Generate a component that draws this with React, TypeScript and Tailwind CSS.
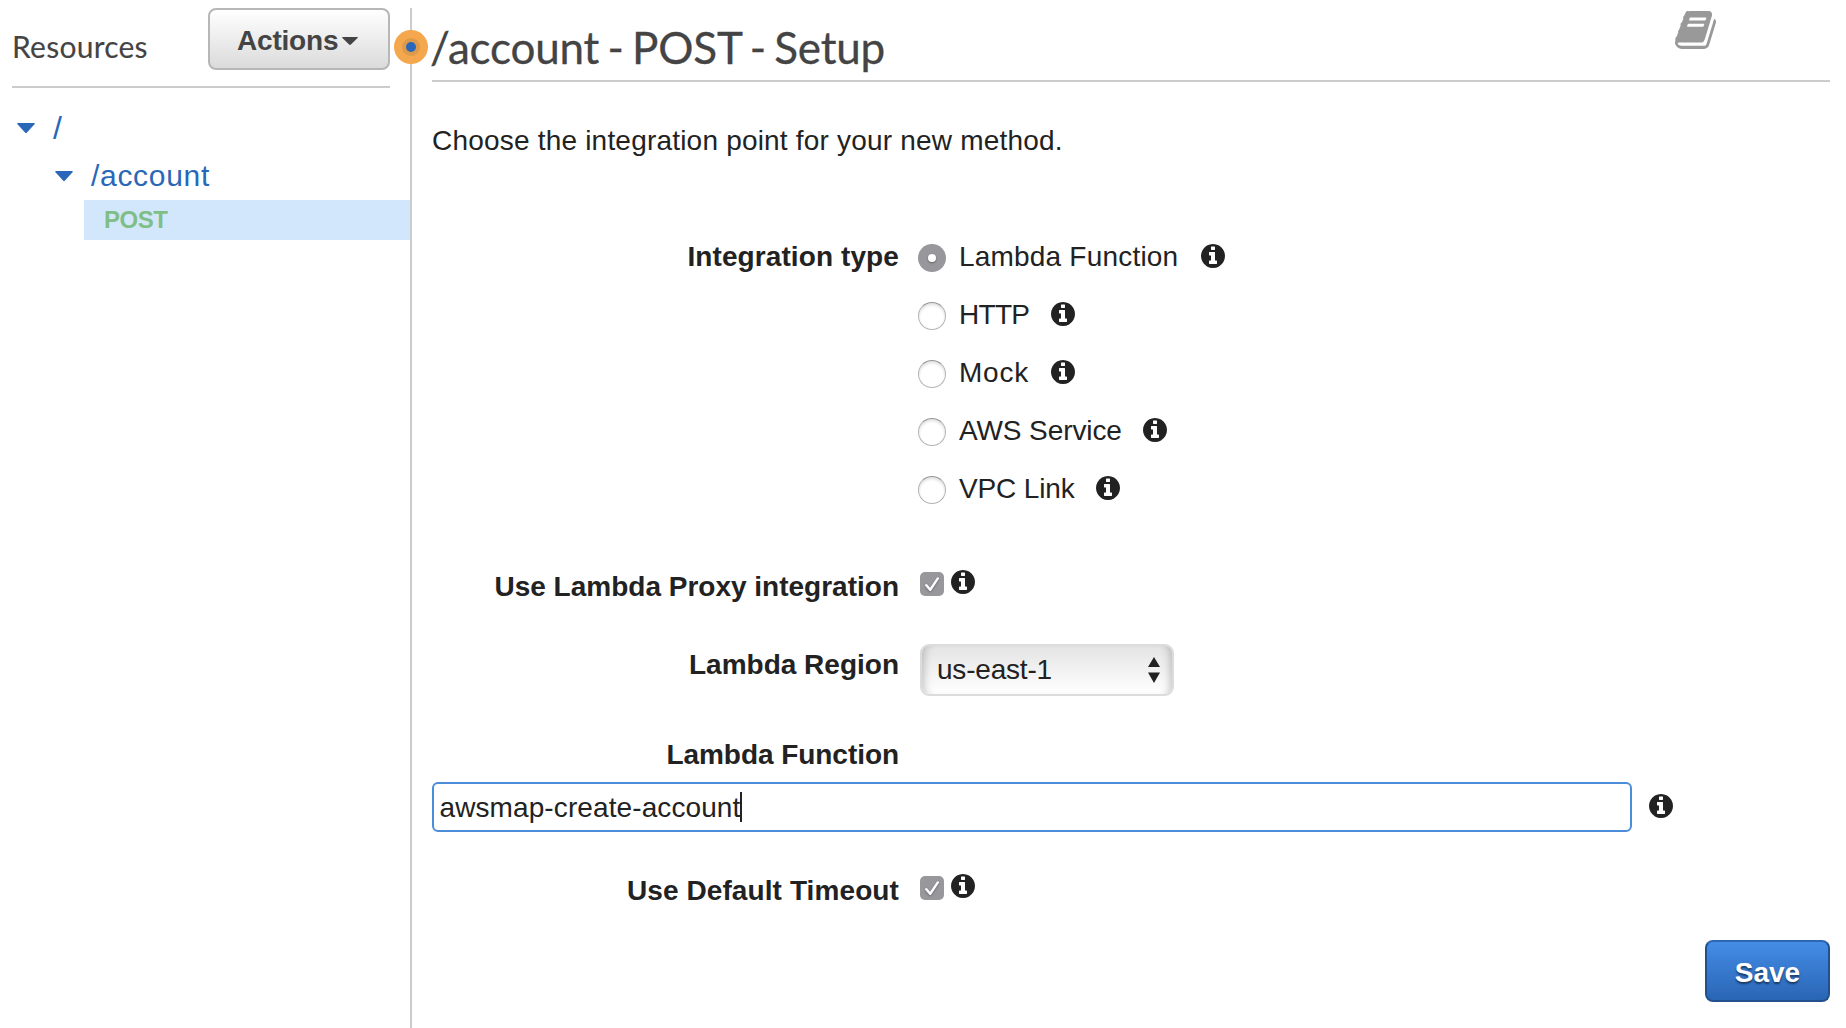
import React from "react";

function InfoIcon({ className = "" }: { className?: string }) {
  return (
    <svg viewBox="128 128 1536 1536" className={`h-6 w-6 shrink-0 ${className}`} fill="#222">
      <path d="M1152 1376v-160q0-14-9-23t-23-9h-96v-512q0-14-9-23t-23-9h-320q-14 0-23 9t-9 23v160q0 14 9 23t23 9h96v320h-96q-14 0-23 9t-9 23v160q0 14 9 23t23 9h448q14 0 23-9t9-23zm-128-896v-160q0-14-9-23t-23-9h-192q-14 0-23 9t-9 23v160q0 14 9 23t23 9h192q14 0 23-9t9-23zm640 416q0 209-103 385.5t-279.5 279.5-385.5 103-385.5-103-279.5-279.5-103-385.5 103-385.5 279.5-279.5 385.5-103 385.5 103 279.5 279.5 103 385.5z" />
    </svg>
  );
}

function BookIcon() {
  return (
    <svg viewBox="64 128 1664 1536" className="mr-[114px] mt-[11px] h-[38px] w-[41px]" fill="#999">
      <path d="M1703 478q40 57 18 129l-275 906q-19 64-76.5 107.5t-122.5 43.5h-923q-77 0-148.5-53.5t-99.5-131.5q-24-67-2-127 0-4 3-27t4-37q1-8-3-21.5t-3-19.5q2-11 8-21t16.5-23.5 16.5-23.5q23-38 45-91.5t30-91.5q3-10 .5-30t-.5-28q3-11 17-28t17-23q21-36 42-92t25-90q1-9-2.5-32t.5-28q4-13 22-30.5t22-22.5q19-26 42.5-84.5t27.5-96.5q1-8-3-25.5t-2-26.5q2-8 9-18t18-23 17-21q8-12 16.5-30.5t15-35 16-36 19.5-32 26.5-23.5 36-11.5 47.5 5.5l-1 3q38-9 51-9h761q74 0 114 56t18 130l-274 906q-36 119-71.5 153.5t-128.5 34.5h-869q-27 0-38 15-11 16-1 43 24 70 144 70h923q29 0 56-15.5t35-41.5l300-987q7-22 5-57 38 15 59 43zm-1064 2q-4 13 2 22.5t20 9.5h608q13 0 25.5-9.5t16.5-22.5l21-64q4-13-2-22.5t-20-9.5h-608q-13 0-25.5 9.5t-16.5 22.5zm-83 256q-4 13 2 22.5t20 9.5h608q13 0 25.5-9.5t16.5-22.5l21-64q4-13-2-22.5t-20-9.5h-608q-13 0-25.5 9.5t-16.5 22.5z" />
    </svg>
  );
}

function Caret({ className }: { className: string }) {
  return (
    <svg viewBox="0 0 18 10" preserveAspectRatio="none" className={className} fill="currentColor">
      <path d="M1 0H17Q18.500 0 17.500 1.200L10 9.400Q9 10.400 8 9.400L0.500 1.200Q-0.500 0 1 0Z" />
    </svg>
  );
}

function Checkbox() {
  return (
    <span className="flex h-6 w-6 shrink-0 items-center justify-center rounded-[5px] bg-[#98979c]">
      <svg viewBox="0 0 24 24" className="h-6 w-6 drop-shadow-[0_1px_1px_rgba(0,0,0,0.3)]" fill="none" stroke="#fff" strokeWidth="2.4" strokeLinecap="round" strokeLinejoin="round">
        <path d="M6.300 13.200L10.200 17.800L17.800 6.400" />
      </svg>
    </span>
  );
}

function Radio({ checked }: { checked?: boolean }) {
  if (checked) {
    return (
      <span className="mt-1 flex h-7 w-7 shrink-0 items-center justify-center rounded-full bg-[#98979c]">
        <span className="h-2 w-2 rounded-full bg-white shadow-[0_1px_2px_rgba(0,0,0,0.35)]" />
      </span>
    );
  }
  return (
    <span className="mt-1 h-7 w-7 shrink-0 rounded-full border border-[#b4b4b4] border-t-[#959595] bg-white shadow-[inset_0_2px_3px_rgba(0,0,0,0.13)]" />
  );
}

const options = [
  { label: "Lambda Function", width: "w-[219.5px]", tracking: "tracking-[0.2px]", checked: true },
  { label: "HTTP", width: "w-[70px]", tracking: "tracking-[-0.7px]" },
  { label: "Mock", width: "w-[70px]", tracking: "tracking-[0.8px]" },
  { label: "AWS Service", width: "w-[162px]", tracking: "tracking-[-0.1px]" },
  { label: "VPC Link", width: "w-[115px]", tracking: "tracking-[-0.15px]" },
];

function Label({ children, className = "" }: { children: React.ReactNode; className?: string }) {
  return (
    <div className={`h-10 w-[467px] shrink-0 whitespace-nowrap text-right font-bold leading-[42px] ${className}`}>
      {children}
    </div>
  );
}

export default function App() {
  return (
    <div className="flex h-[1028px] w-[1846px] overflow-hidden bg-white font-['Liberation_Sans',Arial,sans-serif] text-[28px] text-[#222]">
      <aside className="relative mt-2 w-[412px] shrink-0 border-r-2 border-[#ccc]">
        <header className="ml-3 flex h-20 w-[378px] items-start justify-between border-b-2 border-[#ccc]">
          <h2 className="mt-[18px] font-[Lato] text-[30px] leading-10 tracking-[0.25px] text-[#444] [-webkit-text-stroke:0.1px_#444]">
            Resources
          </h2>
          <button className="flex h-[62px] w-[182px] items-center rounded-lg border-2 border-[#b7b7b7] bg-linear-to-b from-white to-[#dbdbdb] pl-[27px] font-bold text-[#444]">
            <span className="w-[105px] pt-[3px] text-left leading-10 tracking-[-0.2px]">Actions</span>
            <Caret className="mt-[3px] h-2 w-4" />
          </button>
        </header>
        <nav className="text-[#2a67b8]">
          <div className="mt-5 flex h-10 items-center pl-[17px]">
            <Caret className="h-2.5 w-[18px]" />
            <span className="ml-[18px] text-[32px] leading-10">/</span>
          </div>
          <div className="mt-2 flex h-10 items-center pl-[55px]">
            <Caret className="h-2.5 w-[18px]" />
            <span className="ml-[18px] text-[30px] leading-10 tracking-[0.7px]">/account</span>
          </div>
          <div className="ml-[84px] mt-1 h-10 bg-[#d3e7fc] pl-5 text-2xl font-bold leading-[39px] tracking-[-0.5px] text-[#7fbf87]">
            POST
          </div>
        </nav>
        <span className="absolute -right-[18px] top-[22px] flex h-[34px] w-[34px] items-center justify-center rounded-full bg-[#f4a74c]">
          <span className="flex h-[18px] w-[18px] items-center justify-center rounded-full bg-[#dd9a4b]">
            <span className="h-2.5 w-2.5 rounded-full bg-[#2a67b8]" />
          </span>
        </span>
      </aside>

      <main className="ml-5 flex w-[1398px] flex-col">
        <header className="flex h-[82px] shrink-0 items-start justify-between border-b-2 border-[#ccc]">
          <h1 className="-ml-0.5 mt-[19px] whitespace-nowrap font-[Lato] text-[44px] leading-[56px] tracking-[-0.2px] text-[#444] [-webkit-text-stroke:0.3px_#444] [word-spacing:-2.7px]">
            /account - POST - Setup
          </h1>
          <BookIcon />
        </header>
        <p className="mt-[38px] h-10 leading-[42px] tracking-[0.2px]">Choose the integration point for your new method.</p>

        <section className="mt-[76px] flex">
          <Label className="tracking-[0.1px]">Integration type</Label>
          <div className="ml-[19px] flex flex-col gap-[18px]">
            {options.map((o) => (
              <label key={o.label} className="flex h-10 items-start pt-1">
                <Radio checked={o.checked} />
                <span className={`-mt-1 ml-[13px] whitespace-nowrap leading-[42px] ${o.width} ${o.tracking}`}>{o.label}</span>
                <InfoIcon className="ml-[22px] mt-1" />
              </label>
            ))}
          </div>
        </section>

        <section className="mt-[58px] flex">
          <Label>Use Lambda Proxy integration</Label>
          <div className="ml-[21px] mt-1 flex h-6 gap-[7px]">
            <span className="mt-0.5"><Checkbox /></span>
            <InfoIcon />
          </div>
        </section>

        <section className="mt-[38px] flex h-[52px]">
          <Label>Lambda Region</Label>
          <div className="ml-[21px] flex h-[52px] w-[254px] items-center justify-between rounded-[9px] border-2 border-[#dcdcdc] bg-linear-to-b from-[#e4e4e4] to-white pl-[15px] pr-[11px] shadow-[inset_9px_0_8px_-7px_rgba(0,0,0,0.22),inset_-9px_0_8px_-7px_rgba(0,0,0,0.22)]">
            <span className="leading-10 tracking-[-0.2px]">us-east-1</span>
            <svg viewBox="0 0 14 26" className="h-[26px] w-3.5" fill="#222">
              <path d="M7 0L13 10H1ZM1 15.500H13L7 26Z" />
            </svg>
          </div>
        </section>

        <Label className="mt-[38px] tracking-[-0.05px]">Lambda Function</Label>
        <div className="mt-2 flex items-start">
          <div className="flex h-[50px] w-[1200px] items-center rounded-md border-2 border-[#4b8ddb] pl-[5.5px]">
            <span className="pt-0.5 leading-10 tracking-[0.1px]">awsmap-create-account</span>
            <span className="h-[30px] w-0.5 bg-[#222]" />
          </div>
          <InfoIcon className="ml-[17px] mt-3" />
        </div>

        <section className="mt-[38px] flex">
          <Label className="tracking-[0.1px]">Use Default Timeout</Label>
          <div className="ml-[21px] mt-1 flex h-6 gap-[7px]">
            <span className="mt-0.5"><Checkbox /></span>
            <InfoIcon />
          </div>
        </section>

        <button className="mt-[30px] h-[62px] w-[125px] self-end rounded-lg border-2 border-[#22508f] border-t-[#2f66b0] bg-linear-to-b from-[#448de6] to-[#2a65b5] pt-[3px] font-bold text-white [text-shadow:0_2px_2px_rgba(0,0,0,0.5)]">
          Save
        </button>
      </main>
    </div>
  );
}
